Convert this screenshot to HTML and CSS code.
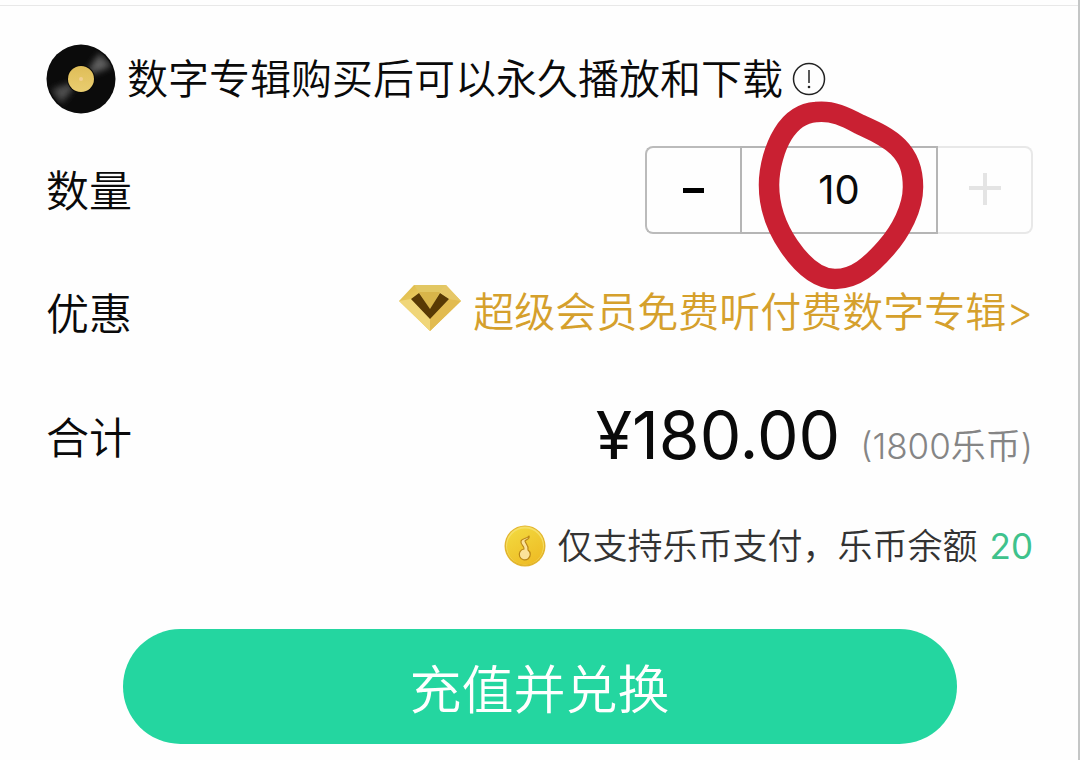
FILE: index.html
```html
<!DOCTYPE html>
<html lang="zh-CN">
<head>
<meta charset="utf-8">
<meta name="viewport" content="width=device-width, initial-scale=1">
<title>数字专辑</title>
<link rel="stylesheet" href="styles.css">
</head>
<body>
<main class="sheet">
  <header class="notice">
    <svg class="disc" viewBox="0 0 70 70" aria-hidden="true">
      <defs>
        <linearGradient id="sheen" x1="1" y1="0.12" x2="0" y2="0.88">
          <stop offset="0" stop-color="#444"/>
          <stop offset="0.2" stop-color="#666"/>
          <stop offset="0.5" stop-color="#222"/>
          <stop offset="0.8" stop-color="#555"/>
          <stop offset="1" stop-color="#333"/>
        </linearGradient>
        <filter id="soft" x="-20%" y="-20%" width="140%" height="140%"><feGaussianBlur stdDeviation="3"/></filter>
        <clipPath id="round"><circle cx="35" cy="35" r="33"/></clipPath>
        <linearGradient id="label" x1="0" y1="0" x2="0" y2="1">
          <stop offset="0" stop-color="#dfbd58"/>
          <stop offset="1" stop-color="#e9cd70"/>
        </linearGradient>
      </defs>
      <circle cx="35" cy="35" r="34.5" fill="#0b0b0b"/>
      <g clip-path="url(#round)"><path d="M35 35 54 9 66 22ZM35 35 5 46 15 60Z" fill="url(#sheen)" filter="url(#soft)"/></g>
      <circle cx="35" cy="35" r="14" fill="#080808"/>
      <circle cx="35" cy="35" r="13" fill="url(#label)"/>
      <circle cx="35" cy="35" r="2" fill="#f2cf90"/>
    </svg>
    <h1 class="notice-text">数字专辑购买后可以永久播放和下载</h1>
    <button class="info" type="button" aria-label="说明">
      <svg viewBox="0 0 34 34" aria-hidden="true">
        <circle cx="17" cy="17" r="15.5" fill="none" stroke="#222" stroke-width="1.5"/>
        <path d="M17 8v13" stroke="#222" stroke-width="1.5"/>
        <circle cx="17" cy="25" r="1.3" fill="#222"/>
      </svg>
    </button>
  </header>

  <section class="row">
    <label class="row-label" for="quantity">数量</label>
    <div class="stepper">
      <button class="step step-minus" type="button" aria-label="减少">
        <svg viewBox="0 0 32 32" aria-hidden="true"><path d="M5 16.5h21" stroke="#000" stroke-width="5"/></svg>
      </button>
      <input class="quantity" id="quantity" type="text" inputmode="numeric" value="10">
      <button class="step step-plus" type="button" aria-label="增加" disabled>
        <svg viewBox="0 0 32 32" aria-hidden="true"><path d="M0 14h32M16 -1v32" stroke="#e4e4e4" stroke-width="4"/></svg>
      </button>
      <svg class="marker" viewBox="0 0 180 200" aria-hidden="true">
        <path d="M65 22C81 20 95 27 108 34C121 40 136 46 147 57C158 68 162 80 162 97C162 118 150 141 135 158C120 175 105 189 84 189C65 189 49 172 38 156C25 137 18 118 18 95C18 77 24 57 32 44C40 31 50 23 65 22Z" fill="none" stroke="#c92032" stroke-width="20.5"/>
      </svg>
    </div>
  </section>

  <section class="row">
    <span class="row-label">优惠</span>
    <a class="offer" href="#vip">
      <svg class="gem" viewBox="0 0 62 48" aria-hidden="true">
        <defs>
          <linearGradient id="gold" x1="0" y1="0" x2="1" y2="1">
            <stop offset="0" stop-color="#dcb640"/>
            <stop offset="0.5" stop-color="#f2d878"/>
            <stop offset="1" stop-color="#d5a83b"/>
          </linearGradient>
        </defs>
        <path d="M15 1h32l15 16-31 30L0 17Z" fill="url(#gold)"/>
        <path d="M15 1h32l-6 7H20Z" fill="#e2c763"/>
        <path d="M47 1l15 16-12-2-9-7Z" fill="#e6c767"/>
        <path d="M0 17l12-2 19 19v13Z" fill="#f0d679"/>
        <path d="M62 17l-12-2-19 19v13Z" fill="#e2bb50"/>
        <path d="M20 8h21L31 26Z" fill="#d8b54a"/>
        <path d="M20 9l11 16L41 9l9 6-19 20L12 15Z" fill="#583904"/>
      </svg>
      <span>超级会员免费听付费数字专辑&gt;</span>
    </a>
  </section>

  <section class="row">
    <span class="row-label">合计</span>
    <p class="total"><strong class="price">¥180.00</strong><span class="coins">(1800乐币)</span></p>
  </section>

  <p class="balance">
    <svg class="coin" viewBox="0 0 42 42" aria-hidden="true">
      <defs>
        <linearGradient id="coin-face" x1="0.2" y1="0" x2="0.8" y2="1">
          <stop offset="0" stop-color="#f2d83e"/>
          <stop offset="1" stop-color="#eebb24"/>
        </linearGradient>
      </defs>
      <circle cx="21" cy="21" r="20.5" fill="#e3b52d"/>
      <circle cx="21" cy="20.5" r="19" fill="#f5df65"/>
      <circle cx="21" cy="21.5" r="18" fill="url(#coin-face)"/>
      <path d="M25 11c-2 3-7 2-8 5-1 4 4 5 3 8a5.500 5.500 0 1 0 4 1c1-5-3-7-3-9 1-2 5-1 4-5Z" fill="#fbe29a" stroke="#b98516" stroke-width="1.2" stroke-linejoin="round"/>
    </svg>
    <span>仅支持乐币支付，乐币余额</span>
    <span class="balance-value">20</span>
  </p>

  <button class="submit" type="button">充值并兑换</button>
</main>
</body>
</html>
```
FILE: styles.css
```css
* {
  box-sizing: border-box;
}

body {
  margin: 0;
  background: #fefefe;
  color: #0a0a0a;
  font-family: Inter, "Noto Sans CJK SC", sans-serif;
  font-weight: 350;
}

button,
input {
  margin: 0;
  padding: 0;
  font: inherit;
  color: inherit;
}

.sheet {
  min-height: 100vh;
  padding: 28px 45px 16px 46px;
  border-right: 2px solid #c4c6c6;
  background: linear-gradient(#e8e8e8, #e8e8e8) 0 5px / 100% 1px no-repeat;
}

.notice {
  display: flex;
  align-items: center;
  min-height: 102px;
}

.disc {
  width: 70px;
  height: 70px;
  margin-right: 11px;
}

.notice-text {
  margin: 0;
  font-size: 41px;
  font-weight: 350;
  line-height: 60px;
}

.info {
  display: flex;
  width: 34px;
  height: 34px;
  margin-left: 9px;
  border: 0;
  background: none;
}

.row {
  display: flex;
  align-items: center;
  justify-content: space-between;
  min-height: 124px;
}

.row:first-of-type {
  min-height: 122px;
}

.row-label {
  font-size: 43px;
  line-height: 60px;
}

.stepper {
  position: relative;
  display: grid;
  grid-template-columns: 95px 198px 95px;
  height: 88px;
  margin-bottom: 2px;
}

.step {
  display: flex;
  align-items: center;
  justify-content: center;
  background: none;
}

.step svg {
  width: 32px;
  height: 32px;
  overflow: visible;
}

.step-minus {
  border: 2px solid #bbb;
  border-right: 0;
  border-radius: 8px 0 0 8px;
}

.step-plus {
  border: 2px solid #e8e8e8;
  border-left: 0;
  border-radius: 0 8px 8px 0;
}

.quantity {
  width: 100%;
  padding-bottom: 2px;
  border: 2px solid #b5b5b5;
  border-radius: 0;
  background: none;
  font-size: 40px;
  font-weight: 400;
  text-align: center;
}

.marker {
  position: absolute;
  top: -56px;
  left: 106px;
  width: 180px;
  height: 200px;
  pointer-events: none;
}

.offer {
  display: flex;
  align-items: center;
  gap: 12px;
  margin-bottom: 4px;
  color: #d5a02c;
  font-size: 41px;
  line-height: 60px;
  text-decoration: none;
}

.gem {
  width: 62px;
  height: 48px;
  margin-bottom: 8px;
}

.total {
  display: flex;
  align-items: baseline;
  gap: 20px;
  margin: 0;
  padding-bottom: 6px;
}

.price {
  font-size: 66px;
  font-weight: 400;
  line-height: 80px;
}

.coins {
  color: #858585;
  font-size: 35px;
}

.balance {
  display: flex;
  align-items: center;
  justify-content: flex-end;
  gap: 12px;
  min-height: 92px;
  margin: 0;
  color: #333;
  font-size: 35px;
  line-height: 52px;
}

.coin {
  width: 42px;
  height: 42px;
}

.balance-value {
  color: #3fc28c;
  font-weight: 400;
}

.submit {
  display: block;
  width: calc(100% - 153px);
  height: 115px;
  margin: 37px auto 0;
  border: 0;
  border-radius: 58px;
  background: #24d6a0;
  color: #fff;
  font-size: 52px;
}
```
